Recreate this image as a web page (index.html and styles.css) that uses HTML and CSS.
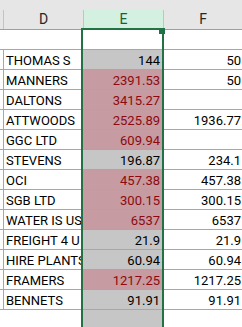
FILE: index.html
```html
<!DOCTYPE html>
<html>
<head>
<meta charset="utf-8">
<link rel="stylesheet" href="styles.css">
</head>
<body>
<div class="sheet">
  <div class="topbar"></div>
  <div class="hdr">
    <div class="hc c0"></div>
    <div class="hc">D</div>
    <div class="hc hsel">E</div>
    <div class="hc">F</div>
  </div>
  <div class="row blank">
    <div class="c0"></div><div class="cd"></div><div class="ce"></div><div class="cf"></div>
  </div>
  <div class="row data">
    <div class="c0"></div><div class="cd">THOMAS S</div><div class="ce g">144</div><div class="cf">50</div>
  </div>
  <div class="row data">
    <div class="c0"></div><div class="cd">MANNERS</div><div class="ce r">2391.53</div><div class="cf">50</div>
  </div>
  <div class="row data">
    <div class="c0"></div><div class="cd">DALTONS</div><div class="ce r">3415.27</div><div class="cf"></div>
  </div>
  <div class="row data">
    <div class="c0"></div><div class="cd">ATTWOODS</div><div class="ce r">2525.89</div><div class="cf">1936.77</div>
  </div>
  <div class="row data">
    <div class="c0"></div><div class="cd">GGC LTD</div><div class="ce r">609.94</div><div class="cf"></div>
  </div>
  <div class="row data">
    <div class="c0"></div><div class="cd">STEVENS</div><div class="ce g">196.87</div><div class="cf">234.1</div>
  </div>
  <div class="row data">
    <div class="c0"></div><div class="cd">OCI</div><div class="ce r">457.38</div><div class="cf">457.38</div>
  </div>
  <div class="row data">
    <div class="c0"></div><div class="cd">SGB LTD</div><div class="ce r">300.15</div><div class="cf">300.15</div>
  </div>
  <div class="row data">
    <div class="c0"></div><div class="cd">WATER IS US</div><div class="ce r">6537</div><div class="cf">6537</div>
  </div>
  <div class="row data">
    <div class="c0"></div><div class="cd">FREIGHT 4 U</div><div class="ce g">21.9</div><div class="cf">21.9</div>
  </div>
  <div class="row data">
    <div class="c0"></div><div class="cd">HIRE PLANTS</div><div class="ce g">60.94</div><div class="cf">60.94</div>
  </div>
  <div class="row data">
    <div class="c0"></div><div class="cd">FRAMERS</div><div class="ce r">1217.25</div><div class="cf">1217.25</div>
  </div>
  <div class="row data last">
    <div class="c0"></div><div class="cd">BENNETS</div><div class="ce g">91.91</div><div class="cf">91.91</div>
  </div>
  <div class="row blank tail">
    <div class="c0"></div><div class="cd"></div><div class="ce g"></div><div class="cf"></div>
  </div>
  <div class="sel"><span class="handle"></span></div>
</div>
</body>
</html>
```
FILE: styles.css
```css
html, body {
  margin: 0;
  padding: 0;
  background: #ffffff;
}
.sheet {
  position: relative;
  width: 242px;
  height: 327px;
  overflow: hidden;
  font-family: Roboto, "Liberation Sans", sans-serif;
  font-size: 13px;
  color: #000;
}
.topbar {
  height: 10px;
  background: #e6e6e6;
}
.hdr {
  display: grid;
  grid-template-columns: 3px 80px 80px 79px;
  height: 19px;
  background: #e6e6e6;
  border-bottom: 1px solid #9f9f9f;
}
.hc {
  border-left: 1px solid #c4c4c4;
  text-align: center;
  line-height: 19px;
  font-size: 14px;
  color: #262626;
}
.hc.c0 {
  border-left: none;
}
.hc.hsel {
  background: #d3f0e0;
  color: #1e5c38;
}
.row {
  display: grid;
  grid-template-columns: 3px 79px 80px 80px;
  height: 19px;
}
.row.data {
  border-top: 1px solid #8ea9db;
}
.row.last {
  border-bottom: 1px solid #8ea9db;
}
.row.tail {
  height: 30px;
}
.row > div {
  padding-top: 2px;
  line-height: 17px;
  white-space: nowrap;
  overflow: hidden;
  box-sizing: border-box;
}
.row.data .cd {
  border-left: 1px solid #8ea9db;
}
.cd {
  padding-left: 2px;
}
.ce {
  border-left: 1px solid transparent;
  text-align: right;
  padding-right: 2px;
}
.cf {
  text-align: right;
  padding-right: 1px;
  border-left: 1px solid transparent;
}
.ce.g {
  background: #c6c6c6;
}
.ce.r {
  background: #c69ba1;
  color: #8c0a0f;
}
.sel {
  position: absolute;
  left: 81px;
  top: 28px;
  width: 79px;
  height: 320px;
  border: 2px solid #217346;
}
.handle {
  position: absolute;
  right: -3px;
  top: -2px;
  width: 6px;
  height: 6px;
  background: #217346;
}
```
